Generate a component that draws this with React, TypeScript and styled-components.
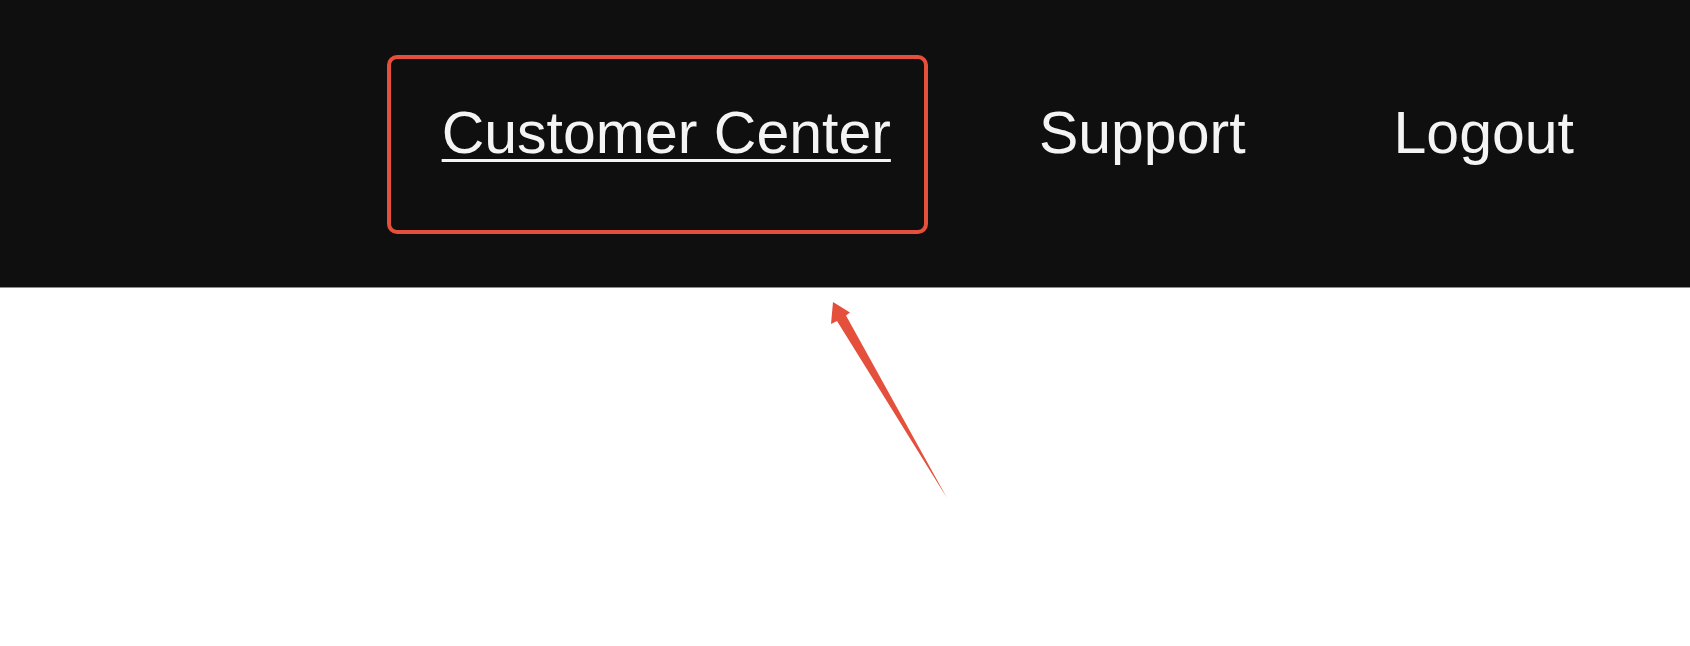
import React from 'react';
import styled, { createGlobalStyle } from 'styled-components';

const GlobalStyle = createGlobalStyle`
  html, body {
    margin: 0;
    padding: 0;
    background: #ffffff;
  }
  body {
    font-family: 'Liberation Sans', Arial, Helvetica, sans-serif;
  }
`;

const links = [
  { label: 'Customer Center', active: true },
  { label: 'Support', active: false },
  { label: 'Logout', active: false },
];

const App = () => {
  return (
    <Page>
      <GlobalStyle />
      <Header>
        <Nav>
          {links.map((link) => (
            <NavLink key={link.label} href='#' $active={link.active}>
              {link.label}
            </NavLink>
          ))}
        </Nav>
      </Header>
      <Arrow viewBox='0 0 1690 646' aria-hidden='true'>
        <polygon
          points='833,302 850,312.5 846,315.5 947,498 837,321 831,324'
          fill='#e4503c'
        />
      </Arrow>
    </Page>
  );
};

export default App;

const Page = styled.div`
  position: relative;
  width: 1690px;
  height: 646px;
  background: #ffffff;
  overflow: hidden;
`;

const Header = styled.header`
  height: 288px;
  background: #0f0f0f;
  border-bottom: 1px solid #8c8c8c;
  box-sizing: border-box;
`;

const Nav = styled.nav`
  display: flex;
  justify-content: flex-end;
  align-items: flex-start;
  gap: 148px;
  padding: 104px 116px 0 0;
`;

const NavLink = styled.a<{ $active: boolean }>`
  position: relative;
  display: block;
  font-size: 59px;
  line-height: 58px;
  color: #f4f4f4;
  text-decoration: ${(p) => (p.$active ? 'underline' : 'none')};
  text-decoration-thickness: 3px;
  text-underline-offset: 6px;
  white-space: nowrap;

  &::before {
    content: '';
    display: ${(p) => (p.$active ? 'block' : 'none')};
    position: absolute;
    left: -55px;
    right: -37px;
    top: -49px;
    bottom: -72px;
    border: 4px solid #e4503c;
    border-radius: 10px;
  }
`;

const Arrow = styled.svg`
  position: absolute;
  left: 0;
  top: 0;
  width: 1690px;
  height: 646px;
  pointer-events: none;
`;
